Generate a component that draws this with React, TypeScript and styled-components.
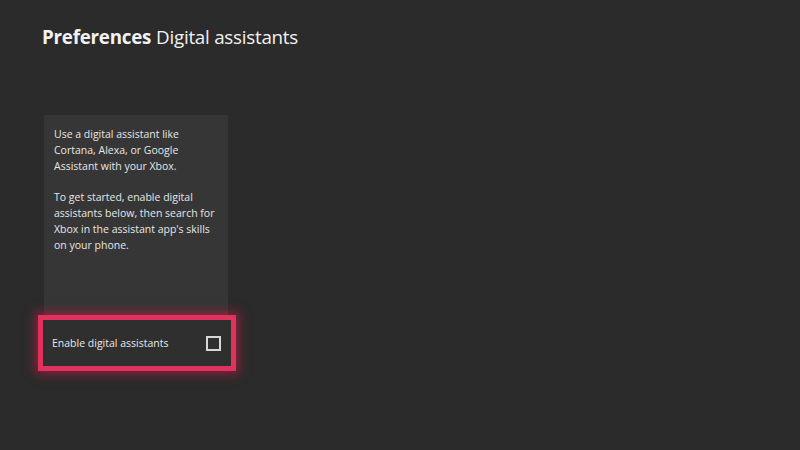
import React, { useState } from "react";
import styled, { createGlobalStyle } from "styled-components";

const GlobalStyle = createGlobalStyle`
  html, body {
    margin: 0;
    padding: 0;
    background: #2b2b2b;
  }
  body {
    font-family: "Open Sans", "Noto Sans", "DejaVu Sans", sans-serif;
    color: #ececec;
  }
`;

const Screen = styled.div`
  width: 800px;
  height: 450px;
  background: #2b2b2b;
  box-sizing: border-box;
  padding: 24px 0 0 42px;
  overflow: hidden;
`;

const Title = styled.h1`
  margin: 0;
  font-size: 18.8px;
  font-weight: 400;
  letter-spacing: -0.25px;
  color: #f2f2f2;
  display: flex;
  gap: 5px;
`;

const Strong = styled.span`
  font-weight: 700;
`;

const Column = styled.div`
  margin: 65px 0 0 2px;
  width: 184px;
  display: flex;
  flex-direction: column;
`;

const InfoPanel = styled.div`
  background: #363636;
  padding: 11px 10px 0 10px;
  height: 200px;
  box-sizing: border-box;
`;

const Para = styled.p`
  margin: 0 0 15px 0;
  font-size: 10.5px;
  line-height: 16px;
  color: #e6e6e6;
`;

// focused row, pink ring with a soft glow
const FocusItem = styled.button`
  margin: 0 0 0 -6px;
  width: 198px;
  height: 56px;
  box-sizing: border-box;
  border: 5px solid #e0325c;
  background: #2f2f2f;
  box-shadow: 0 0 10px 3px rgba(200, 25, 70, 0.6);
  display: flex;
  align-items: center;
  justify-content: space-between;
  padding: 0 10px 0 9px;
  font-family: inherit;
  font-size: 10.5px;
  color: #e8e8e8;
  cursor: pointer;
`;

const Box = styled.span<{ $checked: boolean }>`
  width: 11px;
  height: 11px;
  border: 2px solid #d8d8d8;
  background: ${(p) => (p.$checked ? "#d8d8d8" : "transparent")};
`;

export default function App() {
  const [enabled, setEnabled] = useState(false);

  return (
    <>
      <GlobalStyle />
      <Screen>
        <Title>
          <Strong>Preferences</Strong>
          <span>Digital assistants</span>
        </Title>
        <Column>
          <InfoPanel>
            <Para>
              Use a digital assistant like Cortana, Alexa, or Google Assistant
              with your Xbox.
            </Para>
            <Para>
              To get started, enable digital assistants below, then search for
              Xbox in the assistant app's skills on your phone.
            </Para>
          </InfoPanel>
          <FocusItem onClick={() => setEnabled(!enabled)}>
            Enable digital assistants
            <Box $checked={enabled} />
          </FocusItem>
        </Column>
      </Screen>
    </>
  );
}
